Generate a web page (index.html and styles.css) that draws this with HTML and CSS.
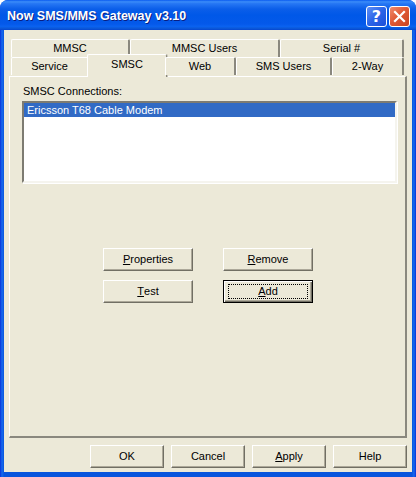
FILE: index.html
```html
<!DOCTYPE html>
<html>
<head>
<meta charset="utf-8">
<link rel="stylesheet" href="styles.css">
</head>
<body>
<div class="window">
  <div class="titlebar">
    <span class="title">Now SMS/MMS Gateway v3.10</span>
    <div class="tb-buttons">
      <div class="tb-btn help">?</div>
      <div class="tb-btn close">
        <svg width="13" height="13" viewBox="0 0 13 13"><path d="M2 2 L11 11 M11 2 L2 11" stroke="#fff" stroke-width="2.2" stroke-linecap="square"/></svg>
      </div>
    </div>
  </div>
  <div class="client">
    <div class="tabstrip">
      <div class="tabrow">
        <div class="tab w119">MMSC</div>
        <div class="tab w150">MMSC Users</div>
        <div class="tab w124">Serial #</div>
      </div>
      <div class="tabrow">
        <div class="tab w78">Service</div>
        <div class="tab w76 selected">SMSC</div>
        <div class="tab w71">Web</div>
        <div class="tab w96">SMS Users</div>
        <div class="tab w72">2-Way</div>
      </div>
    </div>
    <div class="panel">
      <div class="label">SMSC Connections:</div>
      <div class="listbox">
        <div class="item sel">Ericsson T68 Cable Modem</div>
      </div>
      <div class="btngrid">
        <div class="btn"><u>P</u>roperties</div>
        <div class="btn"><u>R</u>emove</div>
        <div class="btn"><u>T</u>est</div>
        <div class="btn default"><span class="focus"><u>A</u>dd</span></div>
      </div>
    </div>
    <div class="footer">
      <div class="btn small">OK</div>
      <div class="btn small">Cancel</div>
      <div class="btn small"><u>A</u>pply</div>
      <div class="btn small">Help</div>
    </div>
  </div>
</div>
</body>
</html>
```
FILE: styles.css
```css
* { box-sizing: border-box; }
html, body { margin: 0; padding: 0; background: #ffffff; }
body { font-family: "Liberation Sans", Arial, sans-serif; font-size: 11px; color: #000; }

.window {
  width: 416px;
  height: 477px;
  background: linear-gradient(to right, #0831d9 0, #166aee 2px, #0855dd 4px, #0855dd 412px, #166aee 414px, #0831d9 416px);
  border-radius: 8px 8px 0 0;
  overflow: hidden;
  display: flex;
  flex-direction: column;
}

.titlebar {
  height: 30px;
  flex: none;
  display: flex;
  align-items: center;
  justify-content: space-between;
  padding: 0 6px 0 7px;
  background: linear-gradient(to bottom, #0a5bf0 0%, #3b8cf8 6%, #2677f4 12%, #0b5ee9 30%, #0058e8 50%, #0459ea 80%, #0a62f0 88%, #0b5ada 94%, #0546d0 100%);
}
.title {
  color: #fff;
  font-family: "Liberation Sans", Arial, sans-serif;
  font-weight: bold;
  font-size: 12.5px;
  text-shadow: 1px 1px 0 #0a1e80;
  padding-top: 1px;
}
.tb-buttons { display: flex; gap: 2px; padding-top: 2px; }
.tb-btn {
  width: 21px;
  height: 21px;
  border: 1px solid #fff;
  border-radius: 3px;
  display: flex;
  align-items: center;
  justify-content: center;
}
.help {
  background: linear-gradient(135deg, #5f8ff5 0%, #2a64e8 50%, #1d4fd8 100%);
  color: #fff;
  font-weight: bold;
  font-size: 16px;
  font-family: "DejaVu Sans", sans-serif;
}
.close {
  background: linear-gradient(135deg, #f08a6c 0%, #e05a36 45%, #c9431f 100%);
}

.client {
  flex: 1;
  margin: 0 4px 5px 4px;
  background: #ece9d8;
  padding: 9px 5px 0 5px;
  display: flex;
  flex-direction: column;
}

.tabstrip { margin-left: 2px; width: 393px; display: flex; flex-direction: column; position: relative; z-index: 1; }
.tabrow { display: flex; height: 18px; }
.tab {
  flex: none;
  height: 18px;
  border-top: 1px solid #fff;
  border-left: 1px solid #fff;
  border-right: 2px solid #8a887e;
  border-radius: 2px 2px 0 0;
  text-align: center;
  line-height: 17px;
  background: #ece9d8;
  color: #000;
}
.tab.selected {
  width: 80px;
  height: 23px;
  margin-top: -3px;
  margin-left: -2px;
  margin-right: -2px;
  line-height: 18px;
  border-right: 1px solid #8a887e;
  box-shadow: 1px 0 0 #c7c4b8;
}
.w119 { width: 119px; }
.w150 { width: 150px; }
.w124 { width: 124px; }
.w78 { width: 78px; }
.w71 { width: 71px; }
.w96 { width: 96px; }
.w72 { width: 72px; }

.panel {
  width: 398px;
  height: 362px;
  margin-top: 1px;
  border-top: 1px solid #fff;
  border-left: 1px solid #fff;
  border-right: 2px solid #8a887e;
  border-bottom: 2px solid #8a887e;
  padding: 7px 0 0 12px;
  display: flex;
  flex-direction: column;
}
.label { height: 17px; line-height: 14px; padding-left: 1px; }
.listbox {
  width: 375px;
  height: 82px;
  background: #fff;
  border-top: 2px solid #7d7b72;
  border-left: 2px solid #7d7b72;
  border-right: 2px solid #f5f4ee;
  border-bottom: 2px solid #f5f4ee;
  box-shadow: 1px 1px 0 #fff;
}
.item { height: 14px; line-height: 14px; padding-left: 3px; }
.item.sel { background: #316ac5; color: #fff; }

.btngrid {
  margin: 65px 0 0 81px;
  display: grid;
  grid-template-columns: 90px 90px;
  column-gap: 30px;
  row-gap: 9px;
}
.btn {
  height: 23px;
  background: #ece9d8;
  border-top: 1px solid #fff;
  border-left: 1px solid #fff;
  border-right: 1px solid #716f64;
  border-bottom: 1px solid #716f64;
  box-shadow: inset -1px -1px 0 #aca899;
  display: flex;
  align-items: center;
  justify-content: center;
  line-height: 13px;
}
.btn.default {
  border: 1px solid #000;
  box-shadow: inset 1px 1px 0 #fff, inset -1px -1px 0 #716f64, inset -2px -2px 0 #aca899;
}
.focus {
  width: 80px;
  height: 15px;
  border: 1px dotted #000;
  display: flex;
  align-items: center;
  justify-content: center;
}
.btn u { text-decoration: underline; text-underline-offset: 1px; }

.footer {
  display: flex;
  justify-content: flex-end;
  gap: 7px;
  margin-top: 7px;
  width: 398px;
}
.btn.small { width: 74px; }
```
